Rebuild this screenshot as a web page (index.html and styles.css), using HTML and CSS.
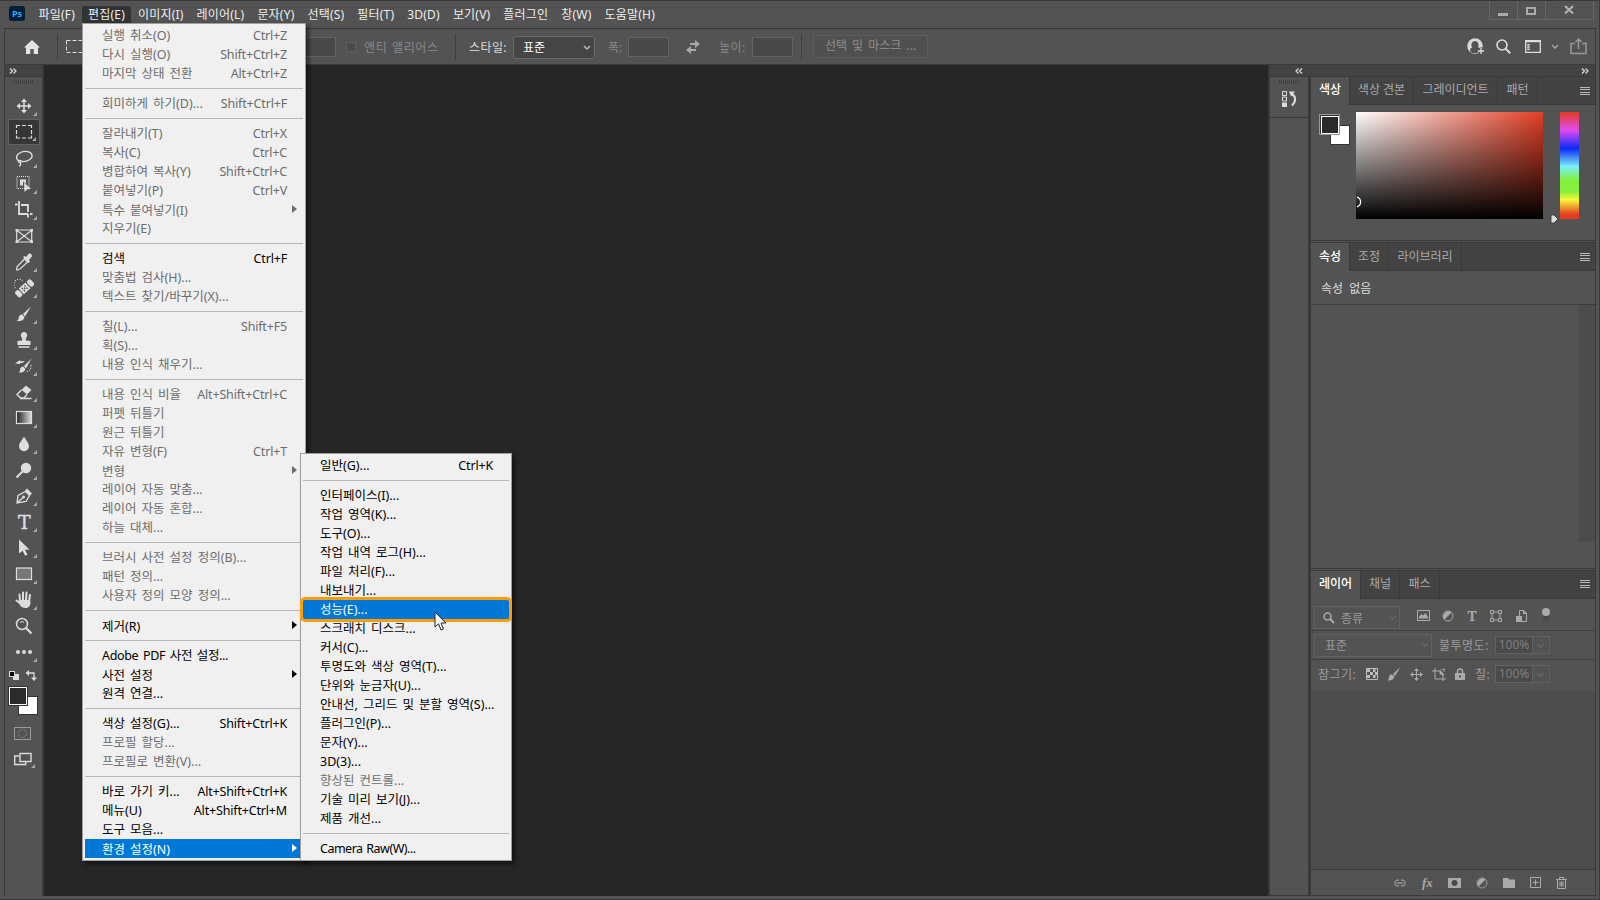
FILE: index.html
```html
<!DOCTYPE html>
<html lang="ko">
<head>
  <meta charset="UTF-8" />
  <title>Photoshop</title>
  <link rel="stylesheet" href="styles.css">
</head>
<body>
<div class="app">

  <!-- title bar -->
  <header class="titlebar">
    <span class="logo">Ps</span>
    <nav class="menubar">
      <span>파일(F)</span><span class="open">편집(E)</span><span>이미지(I)</span><span>레이어(L)</span><span>문자(Y)</span><span>선택(S)</span><span>필터(T)</span><span>3D(D)</span><span>보기(V)</span><span>플러그인</span><span>창(W)</span><span>도움말(H)</span>
    </nav>
    <div class="win-buttons">
      <span><svg width="12" height="12"><path d="M1 9.500h10" stroke="#aaa" stroke-width="3"/></svg></span>
      <span><svg width="12" height="12"><rect x="2" y="3" width="8" height="6" fill="none" stroke="#aaa" stroke-width="2"/></svg></span>
      <span class="close"><svg width="12" height="12"><path d="M2 2l8 7.500M10 2L2 9.500" stroke="#b4b4b4" stroke-width="2"/></svg></span>
    </div>
  </header>

  <!-- options bar -->
  <div class="options">
    <svg class="home" width="16" height="14" viewBox="0 0 16 14"><path d="M8 0L0 7.500h2V14h4.300V9h3.400v5H14V7.500h2z" fill="#e4e4e4"/></svg>
    <i class="vline home-line"></i>
    <svg class="tool-mark" width="18" height="13"><rect x=".5" y=".5" width="17" height="12" fill="none" stroke="#ddd" stroke-dasharray="4 2"/></svg>
    <i class="field feather"></i>
    <i class="check"></i>
    <span class="dim anti">앤티 앨리어스</span>
    <i class="vline style-line"></i>
    <span class="style-label">스타일:</span>
    <span class="select">표준<svg width="8" height="6"><path d="M1 1l3 3 3-3" fill="none" stroke="#bbb" stroke-width="1.500"/></svg></span>
    <span class="dim w-label">폭:</span><i class="field w-field"></i>
    <svg class="swap" width="14" height="14"><path d="M4 4h6M4 10h6" stroke="#aaa" stroke-width="2"/><path d="M9 0l5 4-5 4zM5 6l-5 4 5 4z" fill="#aaa"/></svg>
    <span class="dim h-label">높이:</span><i class="field h-field"></i>
    <i class="vline mask-line"></i>
    <span class="mask-btn">선택 및 마스크 ...</span>
    <div class="options-right">
      <svg width="18" height="17" viewBox="0 0 18 17"><circle cx="8" cy="8" r="7" fill="none" stroke="#ddd" stroke-width="1.500"/><path d="M3 13.500c1-2 3-2 3.500-2.500C4 8 4 3.300 8 3.300S12 8 9.500 11c.5.500 1 .6 1.600.8L10 15H5.500z" fill="#535353"/><path d="M1.500 8a6.500 6.500 0 0 1 13 0c0 1-.3 2-.8 2.800-1-.7-2.200-.8-2.500-1.300C12.500 6.500 11 3 8 3S3.500 6.500 5 9.500c-.4.600-1.600 1-2.500 2C1.800 10.500 1.500 9 1.500 8z" fill="#ddd"/><path d="M14 9.500v7M10.500 13h7" stroke="#535353" stroke-width="3"/><path d="M14 10v6M11 13h6" stroke="#ddd" stroke-width="1.300"/></svg>
      <svg width="15" height="15"><circle cx="6" cy="6" r="5" fill="none" stroke="#ddd" stroke-width="1.600"/><path d="M9.700 9.700l4.500 4.500" stroke="#ddd" stroke-width="2"/></svg>
      <svg class="ws" width="16" height="13"><path d="M.7 1.500h14.600v10.800H.7z" fill="none" stroke="#ddd" stroke-width="1.300"/><path d="M0 1h16" stroke="#ddd" stroke-width="2"/><path d="M3.500 4v6" stroke="#ddd" stroke-width="2.500" stroke-dasharray="1.500 .8"/></svg>
      <svg class="ws-arrow" width="8" height="6"><path d="M1 1l3 3 3-3" fill="none" stroke="#aaa" stroke-width="1.300"/></svg>
      <svg width="17" height="17"><path d="M5 5.500H1v10h15v-10h-4" fill="none" stroke="#999" stroke-width="1.500"/><path d="M8.500 11V1M5.500 4l3-3 3 3" fill="none" stroke="#999" stroke-width="1.500"/></svg>
    </div>
  </div>

  <div class="workspace">
    <!-- tools -->
    <aside class="tools">
      <div class="dock-head"><svg width="8" height="6"><path d="M1 .5L3.500 3 1 5.500M4.500 .5L7 3 4.500 5.500" fill="none" stroke="#ddd" stroke-width="1.200"/></svg></div>
      <div class="grip"></div>
      <div class="tool-list">
        <span class="tool"><svg viewBox="0 0 20 20"><path d="M10 5v10M5 10h10" stroke="#ddd" stroke-width="1.500"/><path d="M10 2.500l3 3.500H7zM10 17.500L7 14h6zM2.500 10L6 7v6zM17.500 10L14 13V7z" fill="#ddd"/></svg></span>
        <span class="tool active"><svg viewBox="0 0 20 20"><path d="M2.500 6V3.500H6M8 3.500h4M14 3.500h3.500V6M17.500 8v4M17.500 13.500V16H14M12 16H8M6 16H2.500v-2.500M2.500 12V8" fill="none" stroke="#ddd" stroke-width="1.200"/></svg></span>
        <span class="tool"><svg viewBox="0 0 20 20"><path d="M5.500 13.500C1 11 2 6.500 6.500 4.500S17 3.500 18 7s-4.500 7-9.500 6.500c-1-.5-2.500-1.500-3.500-.8s0 2 1 1.800 1.500-1 1-1.500M6 14.500c1 1.500 1 3-1 3.500" fill="none" stroke="#ddd" stroke-width="1.300"/></svg></span>
        <span class="tool"><svg viewBox="0 0 20 20"><rect x="3" y="2.500" width="12" height="12" fill="none" stroke="#ddd" stroke-width="1.200" stroke-dasharray="1 1"/><path d="M6 5.500h6v4l-3-2v4H6z" fill="#ddd"/><path d="M10 8.500l7 6.500-3.500.3L10.500 18z" fill="#ddd"/></svg></span>
        <span class="tool"><svg viewBox="0 0 20 20"><path d="M5 1v13h9M1 4.500h2.500M7 5h7v7M14 14v3.500M16 14h2.500" fill="none" stroke="#ddd" stroke-width="1.800"/></svg></span>
        <span class="tool no-more"><svg viewBox="0 0 20 20"><path d="M2.700 4h15v12h-15zM3 4.500l14.500 11M17.500 4.500L3 15.500" fill="none" stroke="#ddd" stroke-width="1.200"/><path d="M1.500 3h2.500v2.500H1.500zM16.500 3H19v2.500h-2.500zM1.500 14.500h2.500V17H1.500zM16.500 14.500H19V17h-2.500z" fill="#ddd"/></svg></span>
        <span class="tool"><svg viewBox="0 0 20 20"><path d="M10.500 7l3 3-7.500 7-3 1-.5-.5.7-3z" fill="none" stroke="#ddd" stroke-width="1.300"/><path d="M9 5l1.500-1 1.500 1 2.500-3c2-1.500 4.500 1 3 3L15 8l1 1.500L14.500 11z" fill="#ddd"/></svg></span>
        <span class="tool"><svg viewBox="0 0 20 20"><g transform="rotate(-42 11 10)"><rect x="0" y="6.200" width="5" height="7.600" rx="2" fill="#ddd"/><rect x="16" y="6.200" width="5" height="7.600" rx="2" fill="#ddd"/><rect x="6" y="6.200" width="9" height="7.600" fill="#ddd"/><path d="M8 8.500h1.300M11.700 8.500H13M8 11.500h1.300M11.700 11.500H13M9.800 10h1.400" stroke="#444" stroke-width="1.500"/></g><path d="M1.500 10a5 5 0 0 1 7-7.500" fill="none" stroke="#ddd" stroke-width="1.200" stroke-dasharray="1 1.500"/></svg></span>
        <span class="tool"><svg viewBox="0 0 20 20"><path d="M17 2.500L9 10l2 2.500zM8.300 10.500l2.200 2.500c-.5 3.500-4 4.500-8 4 2.500-1 1.800-2.500 2.500-4.500.5-1.500 2-2.200 3.300-2z" fill="#ddd"/></svg></span>
        <span class="tool"><svg viewBox="0 0 20 20"><path d="M10 2a3.200 3.200 0 0 1 2.800 4.800C12 8 11.500 9 12 10.500l4.500.5v4h-13v-4l4.500-.5c.5-1.500 0-2.500-.8-3.700A3.200 3.200 0 0 1 10 2zM4.500 16.300h11v1.400h-11z" fill="#ddd"/></svg></span>
        <span class="tool"><svg viewBox="0 0 20 20"><path d="M17.500 2.500L10 10l2 2.500zM9.300 10.500l2 2.500c-.5 3-3.500 4-7 3.500 2-1 1.500-2 2-4 .5-1.300 1.700-2 3-2zM1 7.500L6 4v4zM5 5.500c2.500-.7 5-.7 6 0L8 7H5z" fill="#ddd"/><path d="M17 9c0 4-1.500 6-5 7" fill="none" stroke="#ddd" stroke-width="1.200" stroke-dasharray="1 1.500"/></svg></span>
        <span class="tool"><svg viewBox="0 0 20 20"><path d="M12 3.500l5.500 4.500-4.500 4.500-5.500-4.700z" fill="#ddd"/><path d="M7.500 8L3 12.500l3.500 3.500H10l3-3.500M6 16.500h11.500" fill="none" stroke="#ddd" stroke-width="1.400"/></svg></span>
        <span class="tool"><svg viewBox="0 0 20 20"><defs><linearGradient id="g"><stop offset="0" stop-color="#222"/><stop offset="1" stop-color="#ddd"/></linearGradient></defs><rect x="2.500" y="3.500" width="15" height="12" fill="url(#g)" stroke="#ddd" stroke-width="1.200"/></svg></span>
        <span class="tool"><svg viewBox="0 0 20 20"><path d="M10 2.500c2 4 5 6.500 5 9.800a5 5 0 0 1-10 0C5 9 8 6.500 10 2.500z" fill="#ddd"/></svg></span>
        <span class="tool"><svg viewBox="0 0 20 20"><circle cx="12" cy="8" r="5.200" fill="#ddd"/><path d="M8.500 11.500l-6 6" stroke="#ddd" stroke-width="2"/></svg></span>
        <span class="tool"><svg viewBox="0 0 20 20"><path d="M3 17L4 9.500l7.500-4 4 4-3.500 6zM3 17l5.500-5" fill="none" stroke="#ddd" stroke-width="1.300"/><circle cx="9.500" cy="11" r="1.500" fill="#ddd"/><path d="M11 4.500l2-2 5 5-2 2z" fill="#ddd"/></svg></span>
        <span class="tool type">T</span>
        <span class="tool"><svg viewBox="0 0 20 20"><path d="M5 1.500l10.500 10-4.500.3 2.500 5-2.500 1-2.300-5L5 15.500z" fill="#ddd"/></svg></span>
        <span class="tool"><svg viewBox="0 0 20 20"><rect x="2.500" y="4" width="15" height="11.500" fill="#777" stroke="#ddd" stroke-width="1.200"/></svg></span>
        <span class="tool"><svg viewBox="0 0 20 20"><path d="M6 11L5.500 4.500M9 10V2.500M12 10l.5-7.500M15 11l1-6M7 14l-4.500-3.500" stroke="#ddd" stroke-width="2" stroke-linecap="round"/><path d="M5 10h11l.5 2c0 4-2 6-5 6-4 0-6-3-7-6z" fill="#ddd"/></svg></span>
        <span class="tool no-more"><svg viewBox="0 0 20 20"><circle cx="8" cy="8" r="5.500" fill="none" stroke="#ddd" stroke-width="1.500"/><path d="M12 12l5.500 5.500" stroke="#ddd" stroke-width="2.200"/><path d="M6 6.500q2-2 4 0" fill="none" stroke="#ddd"/></svg></span>
        <span class="tool"><svg viewBox="0 0 20 20"><circle cx="4" cy="10" r="2" fill="#ddd"/><circle cx="10" cy="10" r="2" fill="#ddd"/><circle cx="16" cy="10" r="2" fill="#ddd"/></svg></span>
      </div>
      <svg class="swatches" width="38" height="48"><rect x="8" y="6" width="6" height="6" fill="#ddd"/><rect x="4.500" y="3.500" width="5" height="5" fill="#000" stroke="#ddd"/><path d="M23 5h6v6" fill="none" stroke="#ddd" stroke-width="1.300"/><path d="M24 2v6l-3.500-3zM26 9.500h6L29 13z" fill="#ddd"/><rect x="13.500" y="28.500" width="19" height="18" fill="#fff" stroke="#333"/><rect x="3" y="18" width="20" height="20" fill="#333"/><rect x="4.500" y="19.500" width="17" height="17" fill="#2b2b2b" stroke="#fff"/></svg>
      <svg class="tool-foot" width="38" height="52"><rect x="9.500" y="11.500" width="16" height="12" fill="none" stroke="#999"/><circle cx="17.500" cy="17.500" r="4" fill="none" stroke="#999" stroke-dasharray="1 1"/><path d="M14 40H9.700v8.500h11V46" fill="none" stroke="#ddd" stroke-width="1.400"/><rect x="15" y="37.500" width="11" height="8" fill="none" stroke="#ddd" stroke-width="1.400"/><path d="M30 48v4h-4z" fill="#aaa"/></svg>
    </aside>

    <main class="canvas"></main>

    <!-- panels -->
    <aside class="dock">
      <div class="dock-head">
        <svg class="dl" width="8" height="6"><path d="M3.500 .5L1 3l2.500 2.500M7 .5L4.500 3 7 5.500" fill="none" stroke="#ddd" stroke-width="1.200"/></svg>
        <svg width="8" height="6"><path d="M1 .5L3.500 3 1 5.500M4.500 .5L7 3 4.500 5.500" fill="none" stroke="#ddd" stroke-width="1.200"/></svg>
      </div>
      <div class="dock-body">
        <div class="strip">
          <div class="strip-item">
            <div class="grip"></div>
            <svg width="16" height="18"><path d="M1.500 1.500h4v4h-4zM1.500 7h4v4h-4z" fill="none" stroke="#ddd"/><path d="M1 12.500h5V17H1zM8 1.500h6L10 6.500z" fill="#ddd"/><path d="M10.500 4c4.500 2 5 7 .5 11.500" fill="none" stroke="#ddd" stroke-width="2"/></svg>
          </div>
        </div>
        <div class="panels">
          <section class="panel color-panel">
            <div class="tabs"><span class="on t39">색상</span><span class="t64">색상 견본</span><span class="t84">그레이디언트</span><span class="t40">패턴</span><i class="burger"></i></div>
            <div class="color-body">
              <svg width="31" height="32"><rect x="11.500" y="11.500" width="19" height="19" fill="#fff" stroke="#333"/><rect x=".5" y=".5" width="20" height="20" fill="#333" stroke="#999"/><rect x="2.500" y="2.500" width="17" height="17" fill="#2b2b2b" stroke="#fff"/></svg>
              <div class="field2d"><svg width="8" height="14"><path d="M0 2.200a5 5 0 0 1 0 9.600" fill="none" stroke="#fff" stroke-width="1.200" transform="translate(1)"/></svg></div>
              <svg class="hue-knob" width="9" height="10"><path d="M1 1h3l4 4-4 4H1z" fill="#ddd" stroke="#333" stroke-width=".8"/></svg>
              <div class="hue"></div>
            </div>
          </section>
          <section class="panel prop-panel">
            <div class="tabs tall"><span class="on t39">속성</span><span class="t39">조정</span><span class="t73">라이브러리</span><i class="burger"></i></div>
            <div class="prop-title">속성 없음</div>
            <div class="prop-scroll"></div>
          </section>
          <section class="panel layer-panel">
            <div class="tabs tall"><span class="on t50">레이어</span><span class="t39">채널</span><span class="t40">패스</span><i class="burger"></i></div>
            <div class="lrow filter">
              <span class="lselect kind"><svg width="12" height="12"><circle cx="4.500" cy="4.500" r="3.500" fill="none" stroke="#aaa" stroke-width="1.500"/><path d="M7 7l4 4" stroke="#aaa" stroke-width="2"/></svg>종류<b class="chev"></b></span>
              <svg width="13" height="11"><rect x=".5" y=".5" width="12" height="10" fill="none" stroke="#aaa"/><path d="M2 8.500V7l2.500-3L6 5.500 8.500 3 11 7v1.500z" fill="#aaa"/></svg>
              <svg width="12" height="12"><circle cx="6" cy="6" r="5" fill="none" stroke="#aaa"/><path d="M9.500 2.500a5 5 0 0 1-7 7z" fill="#aaa" transform="rotate(180 6 6)"/></svg>
              <span class="mini-t">T</span>
              <svg width="12" height="12"><path d="M2 2h8v8H2z" fill="none" stroke="#aaa"/><path d="M.5.500h3v3h-3zM8.500.500h3v3h-3zM.5 8.500h3v3h-3zM8.500 8.500h3v3h-3z" fill="#535353" stroke="#aaa"/></svg>
              <svg width="11" height="12"><path d="M3.500 6V.5H8L10.500 3v8.500H6" fill="none" stroke="#aaa"/><path d="M7 0v4h4zM0 6h6v6H0z" fill="#aaa"/></svg>
              <i class="toggle"></i>
            </div>
            <div class="lrow">
              <span class="lselect blend">표준<b class="chev"></b></span>
              <span class="lbl">불투명도:</span><span class="pct">100%</span><span class="pct-arrow"><b class="chev"></b></span>
            </div>
            <div class="lrow lock">
              <span class="lbl">잠그기:</span>
              <svg width="12" height="12"><path d="M.5.500h11v11H.5z" fill="none" stroke="#bbb"/><path d="M1 1h3v3H1zM7 1h2.500v3H7zM4 4h3v3H4zM9 4h2.500v3H9zM1 7h3v3H1zM7 7h2.500v3H7z" fill="#bbb"/></svg>
              <svg width="14" height="14"><path d="M13.500 0L6 7l2 2zM5.300 7.500l2 2C7 13 4 13.500.5 13.500 2.500 12 1.500 11 2.200 9c.6-1.200 1.800-1.700 3.100-1.500z" fill="#aaa"/></svg>
              <svg width="13" height="13"><path d="M6.500 2v9M2 6.500h9" stroke="#aaa"/><path d="M6.500 0L9 3H4zM6.500 13L4 10h5zM0 6.500L3 4v5zM13 6.500L10 9V4z" fill="#aaa"/></svg>
              <svg width="14" height="13"><path d="M3 0v11h11M0 3h8l3 3v7" fill="none" stroke="#aaa"/><path d="M8 2l4 5-4-1zM9 1.500h4M12 0v4" stroke="#aaa" fill="#aaa" stroke-width=".7"/></svg>
              <svg width="10" height="12"><rect y="5" width="10" height="7" fill="#aaa"/><path d="M2.500 5V3.500a2.500 2.500 0 0 1 5 0V5" fill="none" stroke="#aaa" stroke-width="1.500"/><circle cx="5" cy="8.500" r="1.100" fill="#444"/></svg>
              <span class="lbl fill">칠:</span><span class="pct">100%</span><span class="pct-arrow"><b class="chev"></b></span>
            </div>
            <div class="layer-list"></div>
            <div class="layer-foot">
              <svg width="14" height="8"><path d="M6 1.200H4a2.900 2.900 0 0 0 0 5.600h2M8 1.200h2a2.900 2.900 0 0 1 0 5.600H8M4 4h6" fill="none" stroke="#999" stroke-width="1.300"/></svg>
              <span class="fx">fx</span>
              <svg width="13" height="10"><rect width="13" height="10" fill="#aaa"/><circle cx="6.500" cy="5" r="3" fill="#4a4a4a"/></svg>
              <svg width="12" height="12"><circle cx="6" cy="6" r="5" fill="none" stroke="#999"/><path d="M9.500 2.500a5 5 0 0 1-7 7z" fill="#aaa" transform="rotate(180 6 6)"/></svg>
              <svg width="12" height="10"><path d="M0 0h5l1 1.500h6V10H0z" fill="#aaa"/></svg>
              <svg width="11" height="11"><path d="M.5.500h10v10H.5zM5.500 2.500v6M2.500 5.500h6" fill="none" stroke="#aaa"/></svg>
              <svg width="11" height="12"><path d="M0 2.500h11M3.500 2.500V.5h4v2M1.500 2.500v9h8v-9M4 4.500v5M5.500 4.500v5M7 4.500v5" fill="none" stroke="#aaa"/></svg>
            </div>
          </section>
        </div>
      </div>
    </aside>
  </div>
  <div class="bottom-edge"></div>
</div>

<!-- edit menu -->
<ul class="menu edit-menu">
  <li class="off">실행 취소(O)<kbd>Ctrl+Z</kbd></li>
  <li class="off">다시 실행(O)<kbd>Shift+Ctrl+Z</kbd></li>
  <li class="off">마지막 상태 전환<kbd>Alt+Ctrl+Z</kbd></li>
  <li class="sep"></li>
  <li class="off">희미하게 하기(D)...<kbd>Shift+Ctrl+F</kbd></li>
  <li class="sep"></li>
  <li class="off">잘라내기(T)<kbd>Ctrl+X</kbd></li>
  <li class="off">복사(C)<kbd>Ctrl+C</kbd></li>
  <li class="off">병합하여 복사(Y)<kbd>Shift+Ctrl+C</kbd></li>
  <li class="off">붙여넣기(P)<kbd>Ctrl+V</kbd></li>
  <li class="off sub">특수 붙여넣기(I)</li>
  <li class="off">지우기(E)</li>
  <li class="sep"></li>
  <li>검색<kbd>Ctrl+F</kbd></li>
  <li class="off">맞춤법 검사(H)...</li>
  <li class="off">텍스트 찾기/바꾸기(X)...</li>
  <li class="sep"></li>
  <li class="off">칠(L)...<kbd>Shift+F5</kbd></li>
  <li class="off">획(S)...</li>
  <li class="off">내용 인식 채우기...</li>
  <li class="sep"></li>
  <li class="off">내용 인식 비율<kbd>Alt+Shift+Ctrl+C</kbd></li>
  <li class="off">퍼펫 뒤틀기</li>
  <li class="off">원근 뒤틀기</li>
  <li class="off">자유 변형(F)<kbd>Ctrl+T</kbd></li>
  <li class="off sub">변형</li>
  <li class="off">레이어 자동 맞춤...</li>
  <li class="off">레이어 자동 혼합...</li>
  <li class="off">하늘 대체...</li>
  <li class="sep"></li>
  <li class="off">브러시 사전 설정 정의(B)...</li>
  <li class="off">패턴 정의...</li>
  <li class="off">사용자 정의 모양 정의...</li>
  <li class="sep"></li>
  <li class="sub">제거(R)</li>
  <li class="sep"></li>
  <li class="pdf">Adobe PDF 사전 설정...</li>
  <li class="sub">사전 설정</li>
  <li>원격 연결...</li>
  <li class="sep"></li>
  <li>색상 설정(G)...<kbd>Shift+Ctrl+K</kbd></li>
  <li class="off">프로필 할당...</li>
  <li class="off">프로필로 변환(V)...</li>
  <li class="sep"></li>
  <li>바로 가기 키...<kbd>Alt+Shift+Ctrl+K</kbd></li>
  <li>메뉴(U)<kbd>Alt+Shift+Ctrl+M</kbd></li>
  <li>도구 모음...</li>
  <li class="sub hover">환경 설정(N)</li>
</ul>

<!-- preferences submenu -->
<ul class="menu pref-menu">
  <li>일반(G)...<kbd>Ctrl+K</kbd></li>
  <li class="sep"></li>
  <li>인터페이스(I)...</li>
  <li>작업 영역(K)...</li>
  <li>도구(O)...</li>
  <li>작업 내역 로그(H)...</li>
  <li>파일 처리(F)...</li>
  <li>내보내기...</li>
  <li class="hover">성능(E)...</li>
  <li>스크래치 디스크...</li>
  <li>커서(C)...</li>
  <li>투명도와 색상 영역(T)...</li>
  <li>단위와 눈금자(U)...</li>
  <li>안내선, 그리드 및 분할 영역(S)...</li>
  <li>플러그인(P)...</li>
  <li>문자(Y)...</li>
  <li>3D(3)...</li>
  <li class="off">향상된 컨트롤...</li>
  <li>기술 미리 보기(J)...</li>
  <li>제품 개선...</li>
  <li class="sep"></li>
  <li class="latin">Camera Raw(W)...</li>
</ul>
<div class="mark"></div>
<svg class="cursor" width="13" height="21"><path d="M1 1v15l3.500-3.200L7 19l2.500-1L7 12h4.800z" fill="#fff" stroke="#222"/></svg>
</body>
</html>
```
FILE: styles.css
```css
* { box-sizing: border-box; }
body {
  margin: 0;
  width: 1600px;
  height: 900px;
  overflow: hidden;
  background: #535353;
  color: #eee;
  font: 12px "Noto Sans", "Noto Sans CJK KR", sans-serif;
}
svg { display: block; flex: none; }
i, b { display: block; flex: none; }
.app {
  height: 900px;
  display: flex;
  flex-direction: column;
  border: 1px solid #393939;
  border-left: 0;
  white-space: nowrap;
}

/* title bar */
.titlebar {
  height: 27px;
  display: flex;
  padding-left: 9px;
}
.logo {
  width: 16px;
  height: 15px;
  margin-top: 5px;
  border-radius: 3px;
  background: #001e36;
  color: #31a8ff;
  font-size: 9px;
  font-weight: bold;
  line-height: 15px;
  text-align: center;
}
.menubar {
  display: flex;
  margin-left: 7px;
  padding-top: 5px;
  letter-spacing: .2px;
}
.menubar span {
  height: 17px;
  line-height: 17px;
  padding: 0 6.500px;
}
.menubar .open { background: #333; border-radius: 3px 3px 0 0; }
.win-buttons {
  display: flex;
  margin-left: auto;
  margin-right: 5px;
  height: 19px;
  border: 1px solid #666;
  border-top: 0;
}
.win-buttons span {
  width: 28px;
  padding: 4px 8px 4px 7px;
  border-right: 1px solid #666;
}
.win-buttons .close { width: 47px; padding: 3px 17px; border: 0; }

/* options bar */
.options {
  height: 37px;
  margin: 0 3px 0 4px;
  border: 1px solid #3a3a3a;
  display: flex;
  align-items: center;
}
.home { margin-left: 19px; }
.vline { width: 1px; height: 26px; background: #3e3e3e; }
.home-line { margin-left: 17px; }
.tool-mark { margin-left: 8px; }
.field {
  height: 20px;
  background: #484848;
  border: 1px solid #636363;
}
.feather { width: 76px; margin-left: 176px; }
.check { width: 10px; height: 10px; margin-left: 10px; background: #4a4a4a; border: 1px solid #5d5d5d; }
.dim { color: #8a8a8a; }
.anti { width: 83px; margin-left: 8px; letter-spacing: .6px; word-spacing: 1px; }
.style-line { margin-left: 8px; }
.style-label { width: 44px; margin-left: 13px; color: #ddd; letter-spacing: .4px; }
.select {
  width: 82px;
  height: 23px;
  line-height: 21px;
  margin-top: 2px;
  padding: 0 3px 0 9px;
  border: 1px solid #6a6a6a;
  border-radius: 3px;
  background: #454545;
  color: #fff;
  display: flex;
  justify-content: space-between;
  align-items: center;
}
.w-label { width: 20px; margin-left: 13px; }
.w-field { width: 41px; }
.swap { margin-left: 17px; }
.h-label { width: 33px; margin-left: 19px; letter-spacing: .5px; }
.h-field { width: 41px; }
.mask-line { margin-left: 8px; }
.mask-btn {
  width: 115px;
  height: 23px;
  line-height: 20px;
  margin-left: 11px;
  border: 1px solid #5c5c5c;
  background: #505050;
  color: #8f8f8f;
  text-align: center;
  word-spacing: 2px;
}
.options-right {
  display: flex;
  align-items: center;
  margin-left: auto;
  padding-right: 8px;
  gap: 11px;
}
.ws { margin-left: 3px; }
.ws-arrow { margin-left: -1px; }

/* workspace */
.workspace { flex: 1; display: flex; min-height: 0; margin-left: 4px; margin-right: 3px; }
.tools {
  width: 40px;
  border: 1px solid #3a3a3a;
  border-width: 0 2px 0 1px;
}
.dock-head {
  height: 12px;
  background: #434343;
  border-bottom: 1px solid #3a3a3a;
  display: flex;
  justify-content: space-between;
  padding: 3px 4px;
}
.grip {
  height: 4px;
  width: 20px;
  margin: 3px auto 0;
  background: repeating-linear-gradient(90deg, #434343 0 1px, #535353 1px 2px);
}
.tool-list { padding-top: 9px; }
.tool {
  position: relative;
  display: block;
  width: 32px;
  height: 26px;
  margin-left: 3px;
  padding: 3px 0 0 6px;
}
.tool svg { width: 20px; height: 20px; }
.tool::after {
  content: "";
  position: absolute;
  right: 3px;
  bottom: 3px;
  border: 2px solid;
  border-color: transparent #aaa #aaa transparent;
}
.no-more::after { display: none; }
.tool.active { background: #363636; border: 1px solid #636363; border-radius: 2px; padding: 2px 0 0 5px; }
.tool.type { font: 19px/20px "DejaVu Serif", serif; color: #ddd; padding: 3px 0 0 10px; -webkit-text-stroke: .4px #ddd; }
.swatches { margin-top: 3px; }
.canvas { flex: 1; background: #262626; }
.bottom-edge { height: 3px; }

/* docks */
.dock { width: 328px; border: 2px solid #3a3a3a; border-width: 0 1px 1px 2px; }
.dock .dock-head { padding: 3px 6px 3px 25px; }
.dock-body { display: flex; height: 818px; }
.strip { width: 41px; border-right: 3px solid #3a3a3a; }
.strip-item { height: 41px; padding-top: 3px; border-bottom: 1px solid #3a3a3a; }
.strip-item .grip { margin-top: 0; }
.strip-item svg { margin: 6px 0 0 11px; }
.panels { flex: 1; display: flex; flex-direction: column; }
.tabs {
  height: 28px;
  display: flex;
  background: #434343;
  border-bottom: 1px solid #3a3a3a;
  color: #aaa;
  font-size: 12px;
  line-height: 26px;
}
.tabs.tall { height: 29px; line-height: 27px; border-top: 1px solid #3a3a3a; }
.layer-panel .tabs.tall { line-height: 25px; }
.tabs span { border-right: 1px solid #3a3a3a; text-align: center; height: 28px; }
.tabs .on { background: #535353; color: #fff; font-weight: 500; }
.t39 { width: 39px; }
.t40 { width: 40px; }
.t50 { width: 50px; }
.t64 { width: 64px; }
.t73 { width: 73px; }
.t84 { width: 84px; }
.burger {
  width: 10px;
  height: 8px;
  margin: 10px 5px 0 auto;
  background: repeating-linear-gradient(#bbb 0 1px, transparent 1px 2.330px);
}
.color-panel { height: 164px; border-bottom: 1px solid #3a3a3a; }
.color-body { display: flex; padding: 7px 0 0 8px; }
.color-body > svg { margin-top: 2px; }
.field2d {
  width: 187px;
  height: 107px;
  margin-left: 6px;
  padding-top: 83px;
  background: linear-gradient(transparent, #000), linear-gradient(90deg, #fff, #e23e24);
}
.color-body .hue-knob { margin: 102px 1px 0 7px; }
.hue {
  width: 19px;
  height: 107px;
  background: linear-gradient(#e23c22, #e14bf0 17%, #0c28f8 34%, #7ceff8 51%, #82f03c 64%, #84f03a 74%, #f8f83c 82%, #e23c22 96%);
}
.prop-panel { height: 327px; margin-top: 1px; border-bottom: 1px solid #3a3a3a; }
.prop-title { height: 34px; line-height: 35px; padding-left: 10px; border-bottom: 1px solid #3d3d3d; color: #ddd; word-spacing: 3px; }
.prop-scroll { width: 16px; height: 237px; margin-left: auto; background: #4c4c4c; }
.layer-panel { flex: 1; margin-top: 1px; display: flex; flex-direction: column; }
.layer-panel .burger { margin-top: 9px; }
.lrow {
  height: 29px;
  border-bottom: 1px solid #3e3e3e;
  display: flex;
  align-items: center;
  padding-left: 3px;
  color: #9a9a9a;
}
.lrow.filter { height: 32px; padding-top: 6px; }
.lselect {
  height: 23px;
  border: 1px solid #616161;
  display: flex;
  align-items: center;
  padding-left: 8px;
}
.lselect svg { margin-right: 6px; }
.kind { width: 86px; }
.blend { width: 118px; padding-left: 10px; margin-right: 7px; }
.chev { width: 5px; height: 5px; margin: -3px 4px 0 auto; border: solid #6c6c6c; border-width: 0 1px 1px 0; transform: rotate(45deg); }
.filter > svg, .filter > .mini-t { margin-top: -4px; }
.kind + svg { margin-left: 17px; margin-right: 12px; }
.mini-t { width: 12px; margin: 0 12px; font: bold 14px "Noto Serif", "Liberation Serif", serif; text-align: center; color: #aaa; }
.mini-t + svg { margin-right: 14px; }
.toggle { width: 8px; height: 8px; margin: -12px 0 0 15px; border-radius: 4px; background: #aaa; box-shadow: 0 6px 0 -1px #4a4a4a; }
.lbl { width: 56px; letter-spacing: .5px; }
.pct { width: 38px; height: 18px; line-height: 16px; border: 1px solid #616161; background: #4a4a4a; color: #7d7d7d; text-align: center; }
.pct-arrow { width: 17px; height: 18px; padding: 8px 2px 0 0; border: 1px solid #616161; border-left: 0; }
.lock { padding-left: 7px; border: 0; height: 31px; padding-bottom: 3px; }
.lock .lbl { width: 48px; }
.lock svg { margin-right: 9px; }
.lock svg:nth-of-type(5) { margin-right: 10px; }
.lock .fill { width: 20px; }
.layer-list { flex: 1; background: #4d4d4d; border-bottom: 1px solid #3a3a3a; }
.layer-foot { height: 25px; display: flex; align-items: center; justify-content: space-between; padding: 0 28px 0 82px; }
.fx { font: italic bold 13px "Liberation Serif", serif; color: #aaa; }

/* popup menus */
.menu {
  position: absolute;
  margin: 0;
  padding: 2px;
  list-style: none;
  background: #f0f0f0;
  border: 1px solid #a0a0a0;
  box-shadow: 3px 3px 4px rgba(0, 0, 0, .5);
  color: #000;
  font-size: 12.500px;
  word-spacing: 1.800px;
  white-space: nowrap;
}
.edit-menu { left: 82px; top: 23px; width: 224px; }
.pref-menu { left: 300px; top: 453px; width: 212px; }
.menu li {
  height: 19px;
  line-height: 19px;
  padding: 0 16px 0 17px;
  display: flex;
  justify-content: space-between;
}
.menu kbd { font: inherit; letter-spacing: -.17px; }
.menu .off { color: #6d6d6d; }
.menu .sep { height: 11px; padding: 5px 0; }
.menu .sep::before { content: ""; flex: 1; height: 1px; background: #b8b8b8; }
.menu .sub { padding-right: 6px; padding-top: 1px; }
.menu .sub::after { content: ""; margin-top: 4px; border: 4px solid transparent; border-left: 5px solid; border-right: 0; height: 0; }
.menu .hover { background: #0078d7; color: #fff; }
.menu .pdf { letter-spacing: -.35px; }
.menu .latin { letter-spacing: -.5px; word-spacing: 1px; }
.mark {
  position: absolute;
  left: 300px;
  top: 597px;
  width: 212px;
  height: 25px;
  border: 3px solid #ff9c00;
  border-radius: 5px;
}
.cursor { position: absolute; left: 434px; top: 611px; }
```
